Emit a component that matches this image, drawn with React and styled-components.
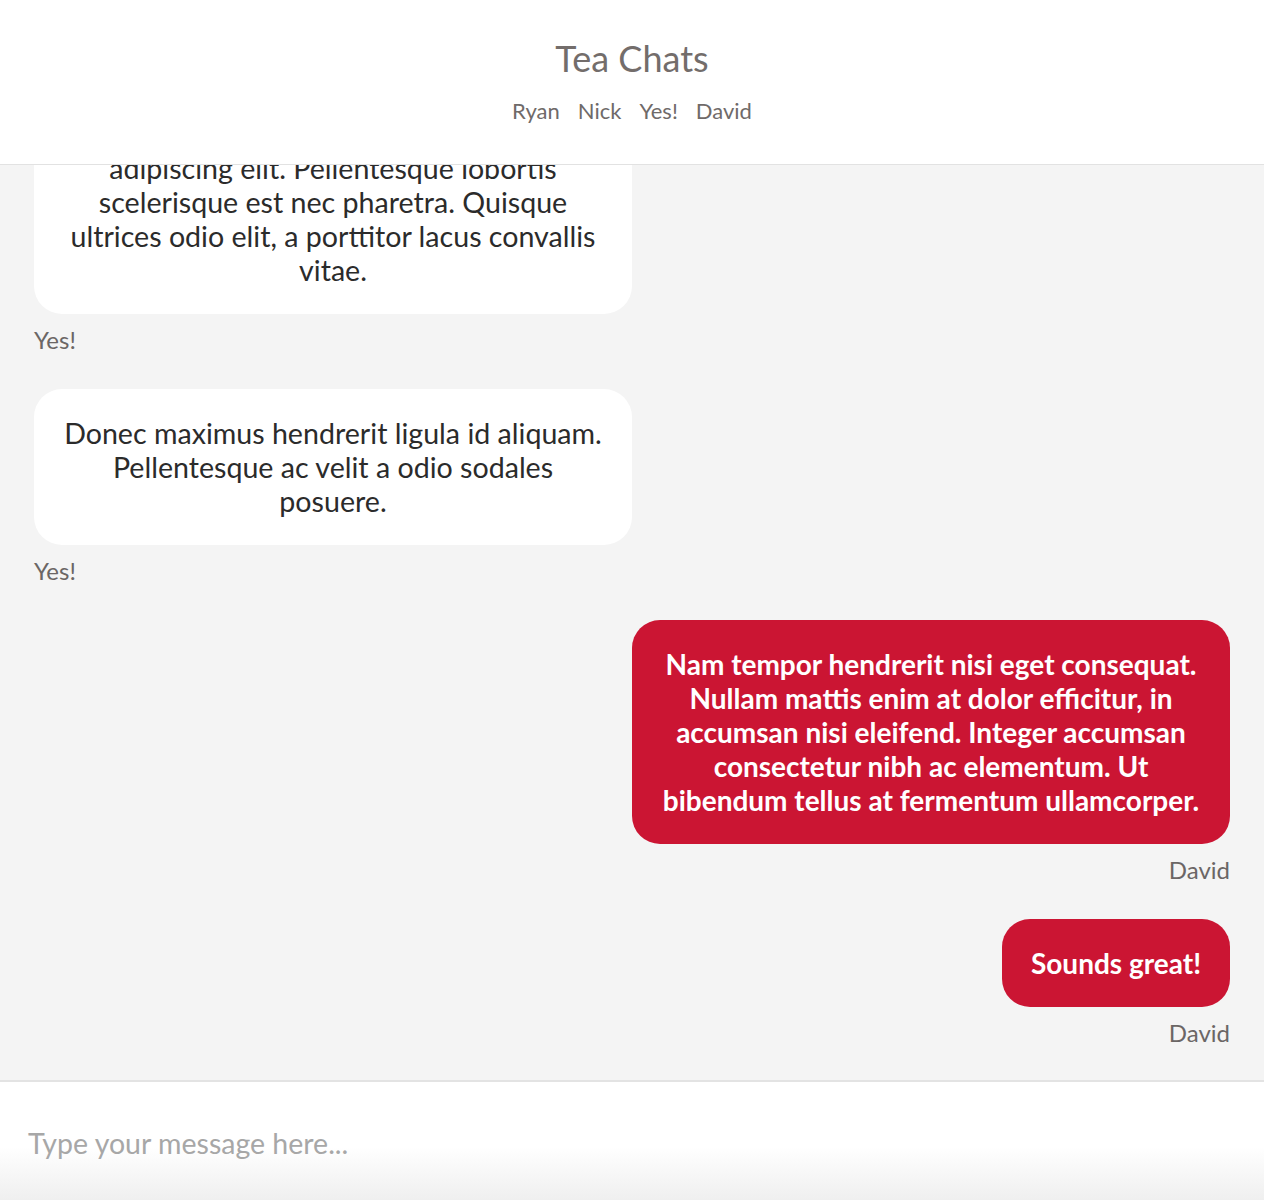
import React from 'react'
import styled, { createGlobalStyle } from 'styled-components'

const GlobalStyle = createGlobalStyle`
  html, body {
    margin: 0;
    padding: 0;
    background: #f4f4f4;
    font-family: Lato, "Open Sans", sans-serif;
  }
  * { box-sizing: border-box; }
`

const messages = [
  { from: 'Ryan', mine: false, text: 'Hey everyone! Anyone up for tea this afternoon?' },
  { from: 'Nick', mine: false, text: 'I am in. Where should we meet?' },
  {
    from: 'Yes!',
    mine: false,
    text: 'Lorem ipsum dolor sit amet, consectetur adipiscing elit. Pellentesque lobortis scelerisque est nec pharetra. Quisque ultrices odio elit, a porttitor lacus convallis vitae.',
  },
  {
    from: 'Yes!',
    mine: false,
    text: 'Donec maximus hendrerit ligula id aliquam. Pellentesque ac velit a odio sodales posuere.',
  },
  {
    from: 'David',
    mine: true,
    text: 'Nam tempor hendrerit nisi eget consequat. Nullam mattis enim at dolor efficitur, in accumsan nisi eleifend. Integer accumsan consectetur nibh ac elementum. Ut bibendum tellus at fermentum ullamcorper.',
  },
  { from: 'David', mine: true, text: 'Sounds great!' },
]

const people = ['Ryan', 'Nick', 'Yes!', 'David']

function App() {
  return (
    <Frame>
      <GlobalStyle />
      <Header>
        <Title>Tea Chats</Title>
        <People>
          {people.map((p) => (
            <Person key={p}>{p}</Person>
          ))}
        </People>
      </Header>
      <ChatBox>
        {messages.map((m, i) => (
          <Group key={i} mine={m.mine}>
            <Bubble mine={m.mine}>{m.text}</Bubble>
            <Sender>{m.from}</Sender>
          </Group>
        ))}
      </ChatBox>
      <Composer>
        <Input placeholder="Type your message here..." />
      </Composer>
    </Frame>
  )
}

const Frame = styled.div`
  width: 100%;
  height: 1200px;
  display: flex;
  flex-direction: column;
  overflow: hidden;
`

const Header = styled.header`
  flex-shrink: 0;
  height: 165px;
  background: #ffffff;
  border-bottom: 1px solid #e2e2e2;
  display: flex;
  flex-direction: column;
  align-items: center;
  padding-top: 36px;
  position: relative;
  z-index: 1;
`

const Title = styled.h1`
  margin: 0;
  font-size: 36px;
  font-weight: 400;
  line-height: 44px;
  color: #736d6b;
`

const People = styled.nav`
  display: flex;
  gap: 18px;
  margin-top: 18px;
`

const Person = styled.span`
  font-size: 22px;
  line-height: 26px;
  color: #6f6a69;
`

const ChatBox = styled.main`
  flex: 1;
  min-height: 0;
  overflow: hidden;
  display: flex;
  flex-direction: column;
  justify-content: flex-end;
  gap: 36px;
  padding: 0 34px 34px;
  background: #f4f4f4;
`

const Group = styled.div`
  flex-shrink: 0;
  display: flex;
  flex-direction: column;
  align-items: ${(p) => (p.mine ? 'flex-end' : 'flex-start')};
`

const Bubble = styled.div`
  max-width: 50%;
  padding: 27px 29px;
  border-radius: 28px;
  text-align: center;
  font-size: ${(p) => (p.mine ? '28px' : '28.6px')};
  line-height: 34px;
  font-weight: ${(p) => (p.mine ? 700 : 400)};
  background: ${(p) => (p.mine ? '#cb1533' : '#ffffff')};
  color: ${(p) => (p.mine ? '#ffffff' : '#2b2b2b')};
`

const Sender = styled.div`
  margin-top: 13px;
  font-size: 24px;
  line-height: 26px;
  color: #6b6665;
`

const Composer = styled.footer`
  flex-shrink: 0;
  height: 120px;
  border-top: 2px solid #e3e3e3;
  background: linear-gradient(#ffffff 55%, #efefef 100%);
  display: flex;
`

const Input = styled.textarea`
  flex: 1;
  border: none;
  outline: none;
  resize: none;
  background: transparent;
  padding: 44px 28px 0;
  font-family: Lato, "Open Sans", sans-serif;
  font-size: 28.5px;
  line-height: 34px;
  color: #333;

  &::placeholder {
    color: #a7a7a7;
  }
`

export default App
